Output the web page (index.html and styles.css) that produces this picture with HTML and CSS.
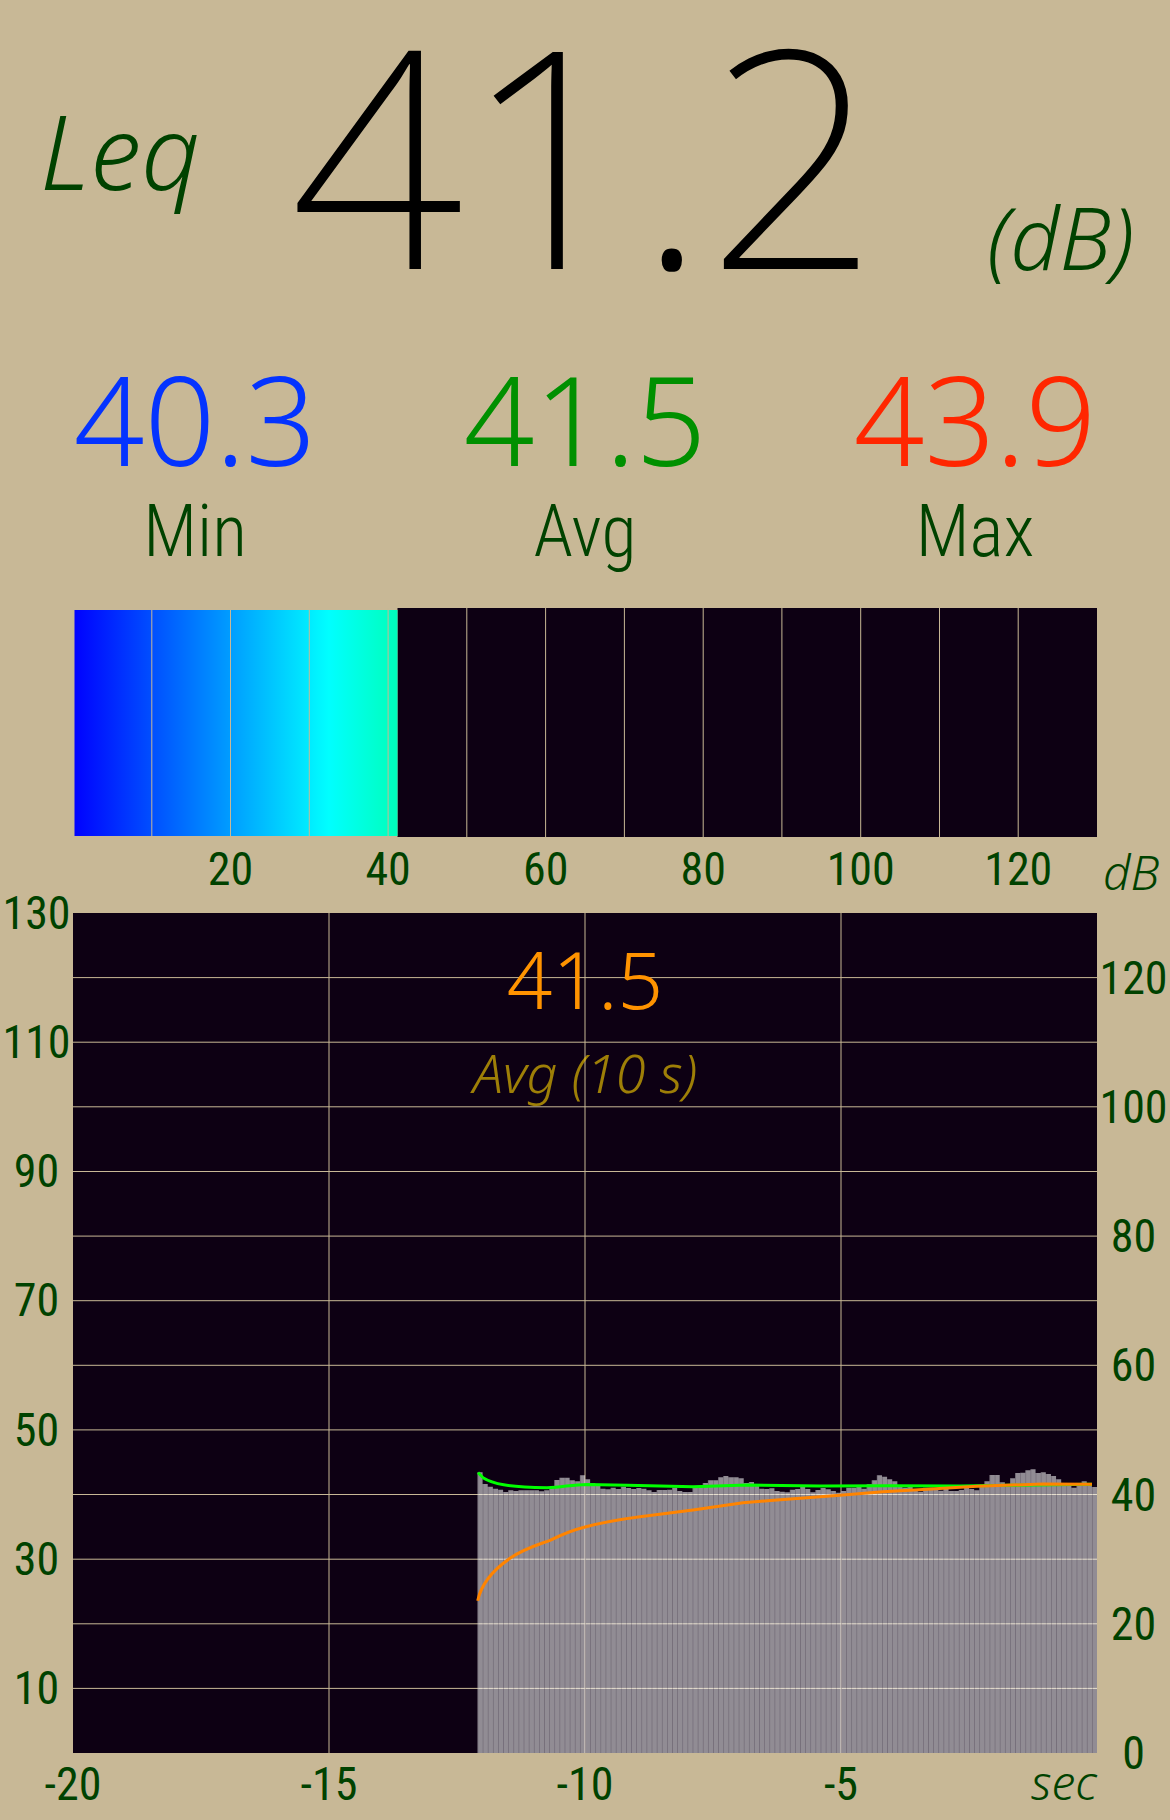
FILE: index.html
```html
<!DOCTYPE html>
<html lang="en">
<head>
<meta charset="utf-8">
<meta name="viewport" content="width=device-width, initial-scale=1">
<title>Sound level meter</title>
<link rel="stylesheet" href="styles.css">
</head>
<body>
<main class="meter">
  <header class="level">
    <span class="level-name">Leq</span>
    <strong class="level-value">41.2</strong>
    <span class="level-unit">(dB)</span>
  </header>

  <dl class="stats">
    <div class="stat stat-min"><dt>Min</dt><dd>40.3</dd></div>
    <div class="stat stat-avg"><dt>Avg</dt><dd>41.5</dd></div>
    <div class="stat stat-max"><dt>Max</dt><dd>43.9</dd></div>
  </dl>

  <section class="gauge" aria-label="Current level">
    <svg class="gauge-bar" viewBox="0 0 1024 229" preserveAspectRatio="none" aria-hidden="true">
      <defs>
        <linearGradient id="scale" gradientUnits="userSpaceOnUse" x1="0" y1="0" x2="1024" y2="0">
          <stop offset="0" stop-color="#00f"/>
          <stop offset=".25" stop-color="#0ff"/>
          <stop offset=".5" stop-color="#0f0"/>
        </linearGradient>
      </defs>
      <path class="well" d="M324.5 0H1024V229H324.5Z"/>
      <path fill="url(#scale)" d="M1.5 2H324.5V228H1.5Z"/>
      <path class="grid" d="M78.8 0V229M157.5 0V229M236.3 0V229M315.1 0V229M393.8 0V229M472.6 0V229M551.4 0V229M630.2 0V229M708.9 0V229M787.7 0V229M866.5 0V229M945.2 0V229"/>
    </svg>
    <div class="gauge-ticks">
      <span>20</span><span>40</span><span>60</span><span>80</span><span>100</span><span>120</span>
    </div>
    <span class="gauge-unit">dB</span>
  </section>

  <section class="chart" aria-label="Level history">
    <div class="axis axis-left">
      <span>130</span><span>110</span><span>90</span><span>70</span><span>50</span><span>30</span><span>10</span>
    </div>
    <div class="plot">
      <svg class="plot-area" viewBox="0 0 1024 840" preserveAspectRatio="none" aria-hidden="true">
        <defs>
          <pattern id="gaps" patternUnits="userSpaceOnUse" x="404.5" y="0" width="5.12" height="840">
            <rect width=".5" height="840" fill="#0d0013" fill-opacity=".35"/>
          </pattern>
          <path id="bars" d="M0 97H1V132H2V140H3V146H4V149H5V156H6V151H7V153H8V151H12V154H13V151H14V144H15V120H16V113H18V121H19V124H20V106H21V118H22V130H23V138H24V146H25V148H26V143H27V147H28V140H29V144H30V147H31V144H32V146H33V151H34V156H35V150H37V149H38V143H39V153H40V156H42V140H44V129H45V121H47V112H48V108H49V112H51V115H52V129H53V126H54V135H55V146H56V147H57V145H58V153H59V155H60V157H61V149H62V147H63V141H64V147H65V157H66V150H67V144H68V148H69V153H70V158H71V153H72V143H74V141H75V146H76V133H77V121H78V106H79V110H80V118H81V124H82V135H83V143H84V140H85V147H86V155H87V143H89V146H90V152H91V147H92V153H94V150H95V144H96V147H97V151H98V138H99V124H100V105H102V127H103V134H104V115H105V99H106V98H107V91H108V88H109V99H110V97H111V102H112V108H113V118H114V130H115V133H116V143H117V133H118V124H119V129H120V141H121V939H0Z"/>
          <clipPath id="bar-shape"><use href="#bars" transform="translate(404.5 527) scale(5.12 .33333)"/></clipPath>
        </defs>
        <rect class="well" width="1024" height="840"/>
        <path class="grid" d="M0 64.6H1024M0 129.2H1024M0 193.8H1024M0 258.5H1024M0 323.1H1024M0 387.7H1024M0 452.3H1024M0 516.9H1024M0 581.5H1024M0 646.2H1024M0 710.8H1024M0 775.4H1024M256 0V840M512 0V840M768 0V840"/>
        <g clip-path="url(#bar-shape)">
          <rect class="bars" x="404" width="620" height="840"/>
          <rect x="404" width="620" height="840" fill="url(#gaps)"/>
        </g>
        <path class="line line-avg" d="M405 559.5L410 564.7C420 571 434 574 474 574.8C490 574 500 571.5 514 571.4L554 572.3L620 573.7L674 571.9L747 573L817 572.7L887 573L937 572.3L1019 571.3"/>
        <path class="line line-recent" d="M404.7 687.7C408 672 420 657 437 645.3C450 636 464 632 477 627.3C490 621 500 617 512 614C530 609 550 606 567 603.7L620 597L670 589.7L704 587L747 583.7L770 582L810 578.7L854 576.3L904 573.3L970 571L1019 571.3"/>
      </svg>
      <div class="recent">
        <strong class="recent-value">41.5</strong>
        <span class="recent-name">Avg (10 s)</span>
      </div>
    </div>
    <div class="axis axis-right">
      <span>120</span><span>100</span><span>80</span><span>60</span><span>40</span><span>20</span><span>0</span>
    </div>
    <div class="axis-time">
      <span>-20</span><span>-15</span><span>-10</span><span>-5</span><span class="time-unit">sec</span>
    </div>
  </section>
</main>
</body>
</html>
```
FILE: styles.css
```css
:root {
  --sand: #c8b896;
  --ink: #004200;
  --night: #0d0013;
  --gutter: 73px;
  --wide: "Noto Sans", sans-serif;
  --narrow: "Roboto Condensed", Roboto, sans-serif;
}

* {
  box-sizing: border-box;
}

body {
  margin: 0;
  background: var(--sand);
  color: var(--ink);
  font-family: var(--narrow);
  overflow-x: hidden;
}

.level {
  display: grid;
  grid-template-columns: 1fr auto 1fr;
  align-items: start;
  font-family: var(--wide);
}

.level-name,
.level-unit {
  font-style: italic;
  font-weight: 350;
}

.level-name {
  padding: 100px 0 0 40px;
  font-size: 103px;
  line-height: 100px;
}

.level-value {
  color: #000;
  font-size: 304px;
  font-weight: 200;
  line-height: 302px;
}

.level-unit {
  padding: 194px 36px 0 0;
  font-size: 86px;
  line-height: 86px;
  text-align: right;
}

.stats {
  display: grid;
  grid-template-columns: repeat(3, 1fr);
  margin: 54px 0 40px;
}

.stat {
  display: flex;
  flex-direction: column-reverse;
  align-items: center;
  gap: 16px;
}

.stat dt {
  font-size: 72px;
  font-weight: 350;
  line-height: 72px;
}

.stat dd {
  margin: 0;
  font: 300 124px/124px var(--wide);
}

.stat-min dd { color: #0433ff; }
.stat-avg dd { color: #009000; }
.stat-max dd { color: #ff2600; }

.gauge,
.chart {
  display: grid;
  grid-template-columns: var(--gutter) 1fr var(--gutter);
}

.gauge {
  row-gap: 9px;
  margin-bottom: 17px;
}

.gauge-bar {
  grid-column: 2;
  display: block;
  width: 100%;
  height: 229px;
}

.gauge-ticks {
  grid-column: 2;
  display: flex;
  height: 50px;
  padding-left: 7.6923%;
  font-size: 46px;
  line-height: 46px;
}

.gauge-ticks span {
  flex: 1;
  text-align: center;
}

.gauge-unit,
.time-unit {
  font: italic 350 48px/48px var(--wide);
}

.gauge-unit {
  align-self: end;
  padding-left: 6px;
}

.well { fill: var(--night); }

.grid {
  fill: none;
  stroke: var(--sand);
  stroke-width: 1;
}

.axis {
  display: flex;
  flex-direction: column;
  font-size: 46px;
  line-height: 46px;
}

.axis span {
  flex: 1;
  display: flex;
  align-items: center;
  justify-content: center;
}

.axis-left { margin-top: -65px; }
.axis-right { margin-bottom: -65px; }

.plot {
  display: grid;
}

.plot-area,
.recent {
  grid-area: 1 / 1;
}

.plot-area {
  display: block;
  width: 100%;
  height: 840px;
}

.bars {
  fill: #fff;
  fill-opacity: .55;
}

.line {
  fill: none;
  stroke-width: 3;
}

.line-avg { stroke: #0f0; }
.line-recent { stroke: #ff8400; }

.recent {
  display: flex;
  flex-direction: column;
  align-items: center;
  gap: 27px;
  padding-top: 25px;
  font-family: var(--wide);
  font-weight: 300;
}

.recent-value {
  color: #ff9300;
  font-size: 80px;
  font-weight: 300;
  line-height: 80px;
}

.recent-name {
  color: rgba(255, 212, 0, .6);
  font-size: 54px;
  font-style: italic;
  line-height: 54px;
}

.axis-time {
  grid-column: 2;
  display: grid;
  grid-template-columns: repeat(4, 2fr) 1fr;
  align-items: baseline;
  margin: 5px 0 12px -12.5%;
  font-size: 46px;
  line-height: 46px;
  text-align: center;
}

.axis-time .time-unit {
  text-align: right;
}
```
